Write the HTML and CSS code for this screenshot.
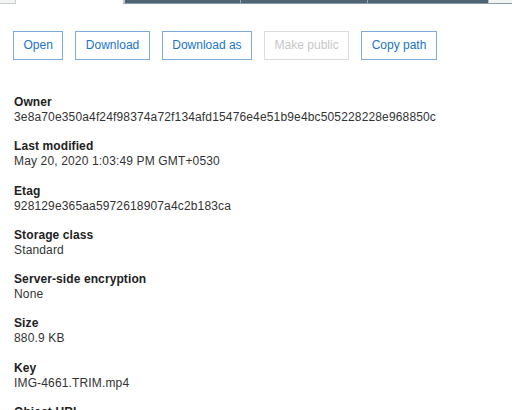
FILE: index.html
```html
<!DOCTYPE html>
<html>
<head>
<meta charset="utf-8">
<link rel="stylesheet" href="styles.css">
</head>
<body>
<div class="tabbar">
  <div class="tab-edge"></div>
  <div class="tab-active"></div>
  <div class="tab-dark t1"></div>
  <div class="tab-dark t2"></div>
  <div class="tab-dark t3"></div>
  <div class="tab-rest"></div>
</div>
<main class="content">
  <div class="actions">
    <button class="btn">Open</button>
    <button class="btn">Download</button>
    <button class="btn">Download as</button>
    <button class="btn disabled">Make public</button>
    <button class="btn">Copy path</button>
  </div>
  <dl class="props">
    <div class="prop"><dt>Owner</dt><dd>3e8a70e350a4f24f98374a72f134afd15476e4e51b9e4bc505228228e968850c</dd></div>
    <div class="prop"><dt>Last modified</dt><dd>May 20, 2020 1:03:49 PM GMT+0530</dd></div>
    <div class="prop"><dt>Etag</dt><dd>928129e365aa5972618907a4c2b183ca</dd></div>
    <div class="prop"><dt>Storage class</dt><dd>Standard</dd></div>
    <div class="prop"><dt>Server-side encryption</dt><dd>None</dd></div>
    <div class="prop"><dt>Size</dt><dd>880.9 KB</dd></div>
    <div class="prop"><dt>Key</dt><dd>IMG-4661.TRIM.mp4</dd></div>
    <div class="prop"><dt>Object URL</dt><dd>https://example.s3.amazonaws.com/IMG-4661.TRIM.mp4</dd></div>
  </dl>
</main>
</body>
</html>
```
FILE: styles.css
```css
html, body {
  margin: 0;
  padding: 0;
  background: #ffffff;
  font-family: "Liberation Sans", Arial, sans-serif;
  overflow: hidden;
}
.tabbar {
  display: flex;
  height: 4px;
}
.tab-edge {
  width: 15px;
  height: 3px;
  background: #f2f3f3;
  border-right: 1px solid #c9cdd0;
  border-bottom: 1px solid #c9cdd0;
}
.tab-active {
  width: 107px;
  background: #ffffff;
}
.tab-dark {
  height: 3px;
  background: #4f6573;
  border-bottom: 1px solid #8a9aa4;
  border-left: 1px solid #9aa6ae;
}
.t1 { width: 115px; border-left: 2px solid #c4cbd0; }
.t2 { width: 126px; }
.t3 { width: 120px; }
.tab-rest {
  flex: 1;
  height: 3px;
  background: #f2f3f3;
  border-left: 1px solid #b8c0c6;
  border-bottom: 1px solid #8a9aa4;
}
.content {
  padding: 0 13px;
}
.actions {
  display: flex;
  gap: 12px;
  margin-top: 27px;
}
.btn {
  font-family: "Liberation Sans", Arial, sans-serif;
  font-size: 12px;
  line-height: 15px;
  padding: 6px 9.5px;
  background: #ffffff;
  color: #2074c6;
  border: 1px solid #7eaad8;
  border-radius: 0;
  margin: 0;
}
.btn.disabled {
  color: #c8c8c8;
  border-color: #dcdcdc;
}
.props {
  margin: 35px 0 0 1px;
}
.prop {
  margin-bottom: 13.9px;
}
.prop dt {
  font-size: 12px;
  line-height: 15px;
  font-weight: bold;
  color: #222222;
  letter-spacing: 0.1px;
}
.prop dd {
  margin: 0;
  font-size: 12px;
  line-height: 15.4px;
  color: #333333;
  letter-spacing: 0.15px;
  white-space: nowrap;
}
```
